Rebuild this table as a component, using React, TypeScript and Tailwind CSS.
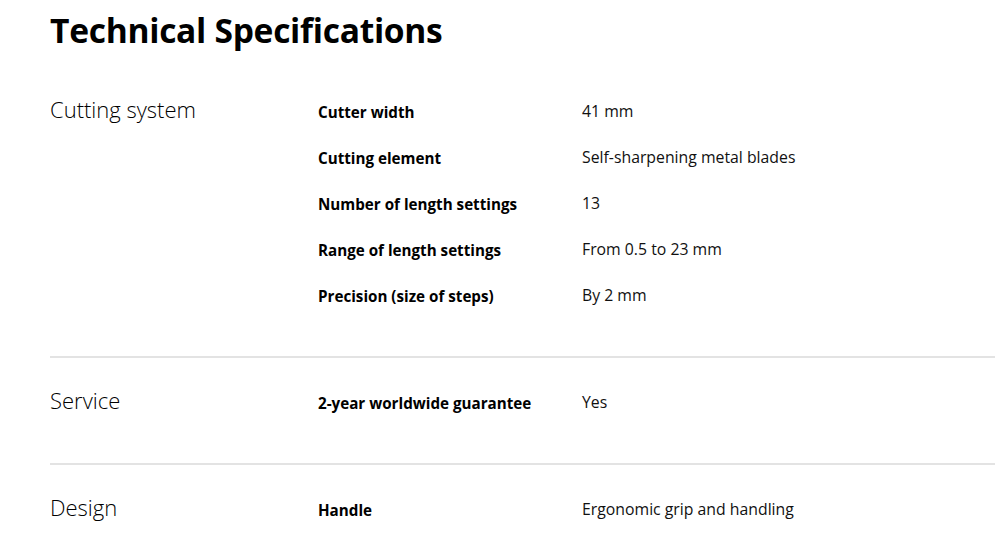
import React from "react";

type Spec = { label: string; value: string };
type Group = { title: string; specs: Spec[] };

const groups: Group[] = [
  {
    title: "Cutting system",
    specs: [
      { label: "Cutter width", value: "41 mm" },
      { label: "Cutting element", value: "Self-sharpening metal blades" },
      { label: "Number of length settings", value: "13" },
      { label: "Range of length settings", value: "From 0.5 to 23 mm" },
      { label: "Precision (size of steps)", value: "By 2 mm" },
    ],
  },
  {
    title: "Service",
    specs: [{ label: "2-year worldwide guarantee", value: "Yes" }],
  },
  {
    title: "Design",
    specs: [{ label: "Handle", value: "Ergonomic grip and handling" }],
  },
];

const App: React.FC = () => {
  return (
    <div className="min-h-screen bg-white pl-[50px] text-[#111] font-['Open_Sans',sans-serif]">
      <h1 className="pt-[8px] text-[33.6px] font-bold leading-[44px] tracking-[-0.3px] text-black">
        Technical Specifications
      </h1>

      <div className="mt-[37px]">
        {groups.map((group, i) => (
          <section
            key={group.title}
            className={`grid grid-cols-[268px_264px_1fr] ${
              i > 0 ? "border-t-2 border-[#e3e3e3] pt-[22px]" : ""
            } ${i < groups.length - 1 ? "pb-[37px]" : ""}`}
          >
            <h2 className="text-[22px] leading-[41px] font-light text-black">
              {group.title}
            </h2>
            <div className="col-span-2">
              {group.specs.map((spec) => (
                <div key={spec.label} className="grid grid-cols-[264px_1fr] h-[46px] items-center">
                  <span className="text-[15.2px] font-bold text-black">{spec.label}</span>
                  <span className="text-[15.8px] text-[#111]">{spec.value}</span>
                </div>
              ))}
            </div>
          </section>
        ))}
      </div>
    </div>
  );
};

export default App;
